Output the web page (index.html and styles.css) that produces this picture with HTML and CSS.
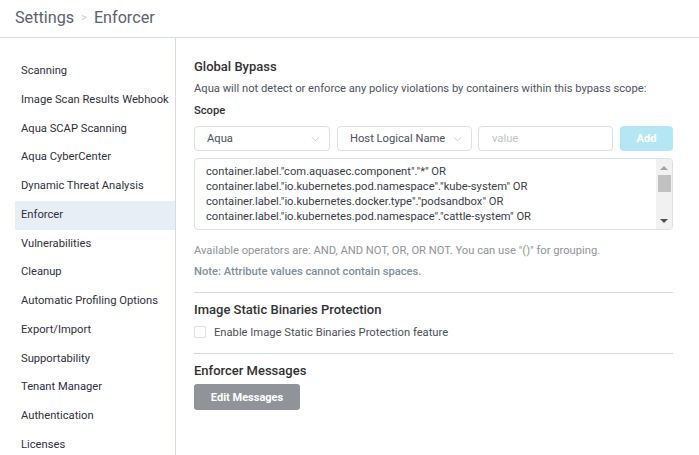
FILE: index.html
```html
<!DOCTYPE html>
<html>
<head>
<meta charset="utf-8">
<link rel="stylesheet" href="styles.css">
</head>
<body>
<header class="topbar">
  <span class="crumb">Settings</span>
  <span class="sep">&gt;</span>
  <span class="crumb">Enforcer</span>
</header>
<div class="layout">
  <nav class="sidebar">
    <a class="nav-item">Scanning</a>
    <a class="nav-item">Image Scan Results Webhook</a>
    <a class="nav-item">Aqua SCAP Scanning</a>
    <a class="nav-item">Aqua CyberCenter</a>
    <a class="nav-item">Dynamic Threat Analysis</a>
    <a class="nav-item active">Enforcer</a>
    <a class="nav-item">Vulnerabilities</a>
    <a class="nav-item">Cleanup</a>
    <a class="nav-item">Automatic Profiling Options</a>
    <a class="nav-item">Export/Import</a>
    <a class="nav-item">Supportability</a>
    <a class="nav-item">Tenant Manager</a>
    <a class="nav-item">Authentication</a>
    <a class="nav-item">Licenses</a>
  </nav>
  <main class="content">
    <h2 class="section-title">Global Bypass</h2>
    <p class="desc">Aqua will not detect or enforce any policy violations by containers within this bypass scope:</p>
    <div class="label">Scope</div>
    <div class="scope-row">
      <div class="select w1"><span>Aqua</span><svg class="chev" viewBox="0 0 10 6" width="9" height="6"><path d="M1 1l4 4 4-4" fill="none" stroke="#c0c4cc" stroke-width="1"/></svg></div>
      <div class="select w2"><span>Host Logical Name</span><svg class="chev" viewBox="0 0 10 6" width="9" height="6"><path d="M1 1l4 4 4-4" fill="none" stroke="#c0c4cc" stroke-width="1"/></svg></div>
      <div class="input w3"><span class="placeholder">value</span></div>
      <button class="add-btn">Add</button>
    </div>
    <div class="textarea">
      <div class="ta-text">
        <div>container.label."com.aquasec.component"."*" OR</div>
        <div>container.label."io.kubernetes.pod.namespace"."kube-system" OR</div>
        <div>container.label."io.kubernetes.docker.type"."podsandbox" OR</div>
        <div>container.label."io.kubernetes.pod.namespace"."cattle-system" OR</div>
      </div>
      <div class="scrollbar">
        <div class="arrow up"></div>
        <div class="thumb"></div>
        <div class="track"></div>
        <div class="arrow down"></div>
      </div>
    </div>
    <p class="help">Available operators are: AND, AND NOT, OR, OR NOT. You can use "()" for grouping.</p>
    <p class="note">Note: Attribute values cannot contain spaces.</p>
    <hr class="divider">
    <h2 class="section-title sm">Image Static Binaries Protection</h2>
    <label class="check-row"><span class="checkbox"></span><span>Enable Image Static Binaries Protection feature</span></label>
    <hr class="divider">
    <h2 class="section-title sm">Enforcer Messages</h2>
    <button class="edit-btn">Edit Messages</button>
  </main>
</div>
</body>
</html>
```

FILE: styles.css
```css
* { box-sizing: border-box; }
html, body { margin: 0; padding: 0; }
body {
  font-family: Roboto, "Liberation Sans", sans-serif;
  background: #fff;
  color: #303133;
  width: 699px;
  height: 455px;
  overflow: hidden;
}
.topbar {
  height: 38px;
  border-bottom: 1px solid #d3dbe3;
  padding: 0 0 3px 15px;
  display: flex;
  align-items: center;
  gap: 7px;
  font-size: 16.2px;
  color: #5b6270;
}
.sep { color: #c6cad2; font-size: 11px; }
.layout {
  display: flex;
  height: 417px;
}
.sidebar {
  width: 176px;
  flex: none;
  border-right: 1px solid #d3dbe3;
  padding: 19px 0 0 15px;
  display: flex;
  flex-direction: column;
}
.nav-item {
  height: 28.77px;
  line-height: 28.77px;
  padding-left: 6px;
  font-size: 11.2px;
  color: #2f2f3e;
  white-space: nowrap;
  flex: none;
}
.nav-item.active { background: #e8eef6; }
.content {
  flex: 1;
  padding: 20px 0 0 18px;
}
.section-title {
  margin: 0;
  font-size: 13px;
  font-weight: 500;
  color: #303133;
  line-height: 18px;
}
.desc {
  margin: 5px 0 0;
  font-size: 11.2px;
  color: #4f5360;
  line-height: 16px;
  white-space: nowrap;
}
.label {
  margin-top: 6px;
  font-size: 11.2px;
  font-weight: 500;
  line-height: 16px;
  color: #303133;
}
.scope-row {
  display: flex;
  margin-top: 7px;
  height: 25px;
}
.select, .input {
  height: 25px;
  border: 1px solid #dcdfe6;
  border-radius: 4px;
  display: flex;
  align-items: center;
  font-size: 11.2px;
  color: #4b4f5c;
  flex: none;
}
.select { justify-content: space-between; padding: 0 9px 0 12px; }
.w1 { width: 136px; }
.w2 { width: 135px; margin-left: 7px; }
.w3 { width: 135px; margin-left: 6px; padding-left: 13px; }
.placeholder { color: #c0c4cc; }
.add-btn {
  margin-left: 7px;
  width: 53px;
  height: 25px;
  border: none;
  border-radius: 4px;
  background: #b5e6f3;
  color: #fff;
  font-family: inherit;
  font-size: 11.2px;
  font-weight: 700;
  padding: 0;
  flex: none;
}
.textarea {
  margin: 7px 0 0 0;
  width: 479px;
  height: 72px;
  border: 1px solid #dcdfe6;
  border-radius: 4px;
  display: flex;
  overflow: hidden;
}
.ta-text {
  flex: 1;
  padding: 5px 0 0 11px;
  font-size: 11.2px;
  line-height: 15px;
  color: #3a3d48;
  white-space: nowrap;
  overflow: hidden;
}
.scrollbar {
  width: 16px;
  background: #f1f1f1;
  display: flex;
  flex-direction: column;
  align-items: center;
  padding: 0 1px;
}
.arrow {
  width: 0; height: 0;
  border-left: 4px solid transparent;
  border-right: 4px solid transparent;
  flex: none;
}
.arrow.up { border-bottom: 4px solid #a3a3a3; margin-top: 7px; }
.thumb { width: 13px; height: 17px; background: #c1c1c1; margin-top: 5px; flex: none; }
.track { flex: 1; }
.arrow.down { border-top: 4px solid #505050; margin-bottom: 6px; }
.help {
  margin: 13px 0 0;
  font-size: 11.2px;
  line-height: 16px;
  color: #909399;
  white-space: nowrap;
}
.note {
  margin: 5px 0 0;
  font-size: 11.2px;
  font-weight: 500;
  line-height: 16px;
  color: #7f8ea0;
}
.divider {
  border: none;
  border-top: 1px solid #d3dbe3;
  margin: 12px 0 0;
  width: 479px;
}
.divider + .section-title { margin-top: 8px; }
.check-row {
  display: flex;
  align-items: center;
  gap: 8px;
  margin-top: 5px;
  font-size: 11.2px;
  color: #4b4f5c;
  height: 16px;
}
.checkbox {
  width: 12px; height: 12px;
  border: 1px solid #dcdfe6;
  border-radius: 2px;
  background: #fff;
  flex: none;
}
.check-row + .divider { margin-top: 13px; }
.edit-btn {
  margin: 4px 0 0 0;
  width: 106px;
  height: 26px;
  border: none;
  border-radius: 3px;
  background: #909399;
  color: #fff;
  font-family: inherit;
  font-size: 11px;
  font-weight: 700;
  padding: 0;
}
```
